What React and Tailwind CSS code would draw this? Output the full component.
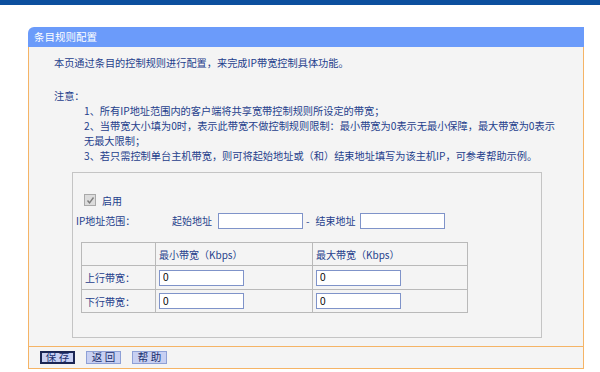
const FONT = "font-['SimSun','Noto_Sans_CJK_SC',sans-serif]"

const TextInput = ({ value = "", className = "" }) => (
  <input
    type="text"
    defaultValue={value}
    className={`h-[16px] w-[85px] border border-[#7f93c9] bg-white px-[3px] text-[10px] leading-[14px] text-black outline-none font-['Liberation_Sans',sans-serif] ${className}`}
  />
)

const Btn = ({ label, active }) => (
  <button
    className={`h-[13px] w-[35px] flex items-center justify-center text-[10.5px] leading-none text-[#1a2f6e] bg-[#c8d0f2] ${
      active ? "border-2 border-[#1b2654]" : "border border-[#8ea0d6]"
    }`}
  >
    {label}
  </button>
)

export default function App() {
  return (
    <div className={`w-[600px] h-[372px] bg-white overflow-hidden text-[10px] ${FONT}`}>
      <div className="h-[5px] bg-[#0c4f9e]" />

      <div className="ml-[28px] mt-[22px] w-[556px]">
        {/* header */}
        <div className="h-[20px] bg-[#6b9bfa] rounded-tl-[6px] flex items-center pl-[6px] text-white text-[10.5px] leading-none">
          条目规则配置
        </div>

        {/* body */}
        <div className="bg-[#f4f4f4] border-x border-[#f5b466] text-[#1f3f8c]">
          <div className="pl-[25px] pt-[8px] h-[41px] leading-[15px] whitespace-nowrap text-[10.2px]">
            本页通过条目的控制规则进行配置，来完成IP带宽控制具体功能。
          </div>

          <div className="pl-[25px] leading-[15px] text-[10.2px]">注意：</div>
          <div className="pl-[55px] leading-[15px] whitespace-nowrap text-[10.2px]">
            <div>1、所有IP地址范围内的客户端将共享宽带控制规则所设定的带宽；</div>
            <div>2、当带宽大小填为0时，表示此带宽不做控制规则限制：最小带宽为0表示无最小保障，最大带宽为0表示</div>
            <div>无最大限制；</div>
            <div>3、若只需控制单台主机带宽，则可将起始地址或（和）结束地址填写为该主机IP，可参考帮助示例。</div>
          </div>

          {/* fieldset box */}
          <div className="ml-[43px] mt-[9px] w-[470px] h-[166px] border border-[#c4c4c4] pt-[20px]">
            <div className="flex items-center h-[14px] pl-[11px]">
              <span className="w-[12px] h-[12px] border border-[#a9a9a9] bg-[#dcdcdc] flex items-center justify-center">
                <svg width="9" height="9" viewBox="0 0 9 9">
                  <path d="M1.5 4.5 L3.5 6.8 L7.5 1.5" fill="none" stroke="#7d7d7d" strokeWidth="1.4" />
                </svg>
              </span>
              <span className="ml-[6px]">启用</span>
            </div>

            <div className="flex items-center h-[17px] mt-[5px] pl-[3px] whitespace-nowrap">
              <span className="w-[96px]">IP地址范围：</span>
              <span className="mr-[6px]">起始地址</span>
              <TextInput className="w-[84px]" />
              <span className="ml-[3px] mr-[6px]">-</span>
              <span className="mr-[5px]">结束地址</span>
              <TextInput className="w-[84px]" />
            </div>

            <table className="ml-[8px] mt-[13px] border-collapse">
              <tbody>
                <tr className="h-[23px]">
                  <td className="w-[74px] border border-[#b9b9b9]" />
                  <td className="w-[157px] border border-[#b9b9b9] pl-[3px]">最小带宽（Kbps）</td>
                  <td className="w-[155px] border border-[#b9b9b9] pl-[3px]">最大带宽（Kbps）</td>
                </tr>
                <tr className="h-[24px]">
                  <td className="border border-[#b9b9b9] pl-[3px]">上行带宽：</td>
                  <td className="border border-[#b9b9b9] pl-[3px]">
                    <TextInput value="0" />
                  </td>
                  <td className="border border-[#b9b9b9] pl-[3px]">
                    <TextInput value="0" />
                  </td>
                </tr>
                <tr className="h-[23px]">
                  <td className="border border-[#b9b9b9] pl-[3px]">下行带宽：</td>
                  <td className="border border-[#b9b9b9] pl-[3px]">
                    <TextInput value="0" />
                  </td>
                  <td className="border border-[#b9b9b9] pl-[3px]">
                    <TextInput value="0" />
                  </td>
                </tr>
              </tbody>
            </table>
          </div>

          <div className="h-[8px]" />

          {/* footer */}
          <div className="border-y border-[#f5b466] h-[23px] flex items-center gap-[11px] pl-[11px]">
            <Btn label="保 存" active />
            <Btn label="返 回" />
            <Btn label="帮 助" />
          </div>
        </div>
      </div>
    </div>
  )
}
